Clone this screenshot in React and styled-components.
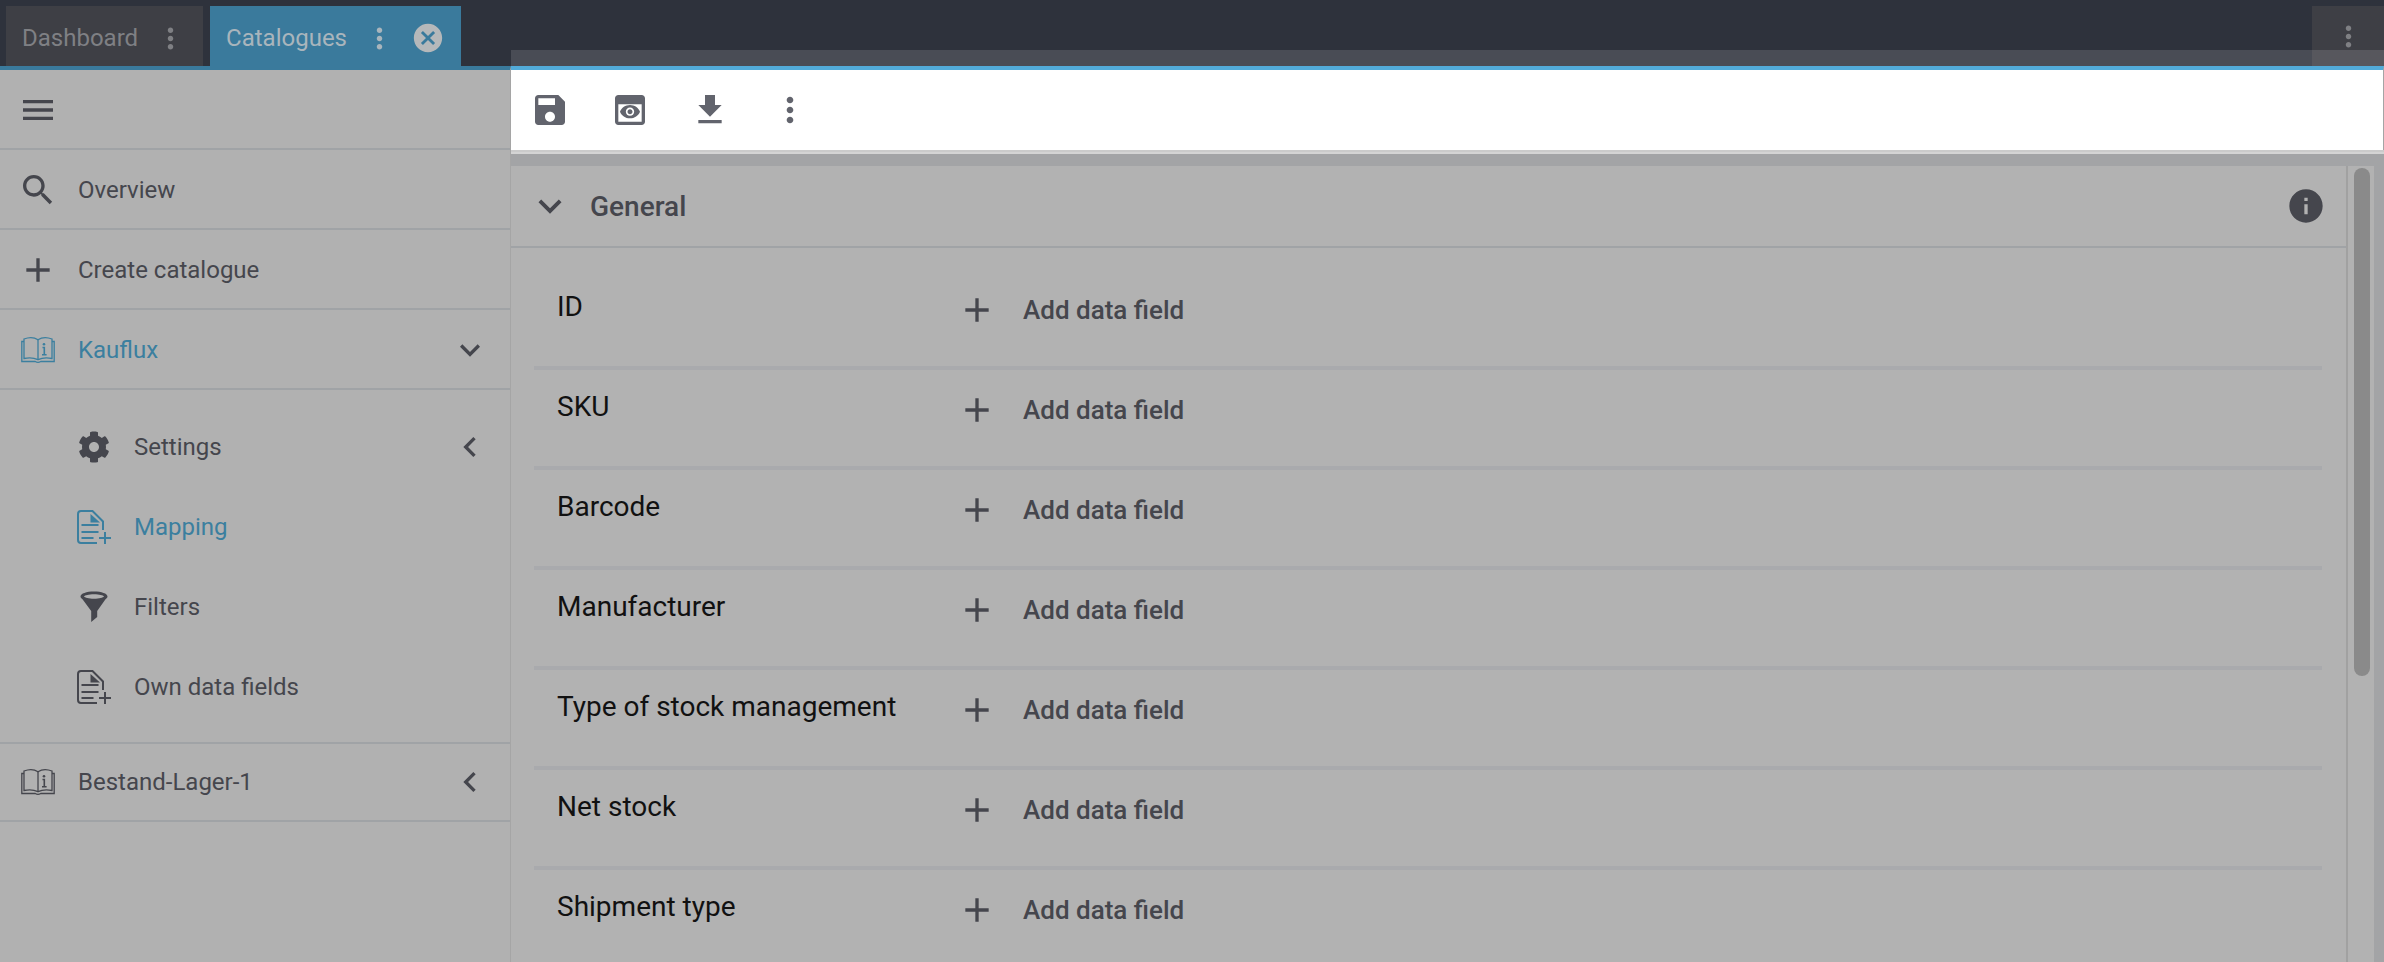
import React from "react";
import styled, { createGlobalStyle } from "styled-components";
import { FaCog } from "react-icons/fa";

const GlobalStyle = createGlobalStyle`
  * {
    box-sizing: border-box;
  }
  html,
  body {
    margin: 0;
    height: 100%;
    overflow: hidden;
    background: #b1b1b1;
    font-family: Roboto, "Liberation Sans", sans-serif;
  }
`;

const ICONS = {
  menu: "M3 18h18v-2H3v2zm0-5h18v-2H3v2zm0-7v2h18V6H3z",
  search:
    "M15.5 14h-.79l-.28-.27C15.41 12.59 16 11.11 16 9.5 16 5.91 13.09 3 9.5 3S3 5.91 3 9.5 5.91 16 9.5 16c1.61 0 3.09-.59 4.23-1.57l.27.28v.79l5 4.99L20.49 19l-4.99-5zm-6 0C7.01 14 5 11.99 5 9.5S7.01 5 9.5 5 14 7.01 14 9.5 11.99 14 9.5 14z",
  add: "M19 13h-6v6h-2v-6H5v-2h6V5h2v6h6v2z",
  more: "M12 8c1.1 0 2-.9 2-2s-.9-2-2-2-2 .9-2 2 .9 2 2 2zm0 2c-1.1 0-2 .9-2 2s.9 2 2 2 2-.9 2-2-.9-2-2-2zm0 6c-1.1 0-2 .9-2 2s.9 2 2 2 2-.9 2-2-.9-2-2-2z",
  save: "M17 3H5c-1.11 0-2 .9-2 2v14c0 1.1.89 2 2 2h14c1.1 0 2-.9 2-2V7l-4-4zm-5 16c-1.66 0-3-1.34-3-3s1.34-3 3-3 3 1.34 3 3-1.34 3-3 3zm3-10H5V5h10v4z",
  preview:
    "M19 3H5c-1.11 0-2 .9-2 2v14c0 1.1.89 2 2 2h14c1.1 0 2-.9 2-2V5c0-1.1-.89-2-2-2zm0 16H5V8.5h14V19zm-5.5-6c0 .83-.67 1.5-1.5 1.5s-1.500-.67-1.500-1.500.67-1.500 1.500-1.500 1.500.67 1.500 1.500zM12 9c-2.730 0-5.060 1.660-6 4 .94 2.340 3.270 4 6 4s5.060-1.660 6-4c-.94-2.340-3.270-4-6-4zm0 6.500c-1.380 0-2.500-1.120-2.500-2.500s1.120-2.500 2.500-2.500 2.500 1.120 2.500 2.500-1.120 2.500-2.500 2.500z",
  download: "M19 9h-4V3H9v6H5l7 7 7-7zM5 18v2h14v-2H5z",
  expand: "M16.59 8.59L12 13.17 7.41 8.59 6 10l6 6 6-6z",
  left: "M15.41 7.41L14 6l-6 6 6 6 1.41-1.41L10.83 12z",
  info: "M12 2C6.48 2 2 6.48 2 12s4.48 10 10 10 10-4.48 10-10S17.52 2 12 2zm1 15h-2v-6h2v6zm0-8h-2V7h2v2z",
  cancel:
    "M12 2C6.47 2 2 6.47 2 12s4.47 10 10 10 10-4.47 10-10S17.53 2 12 2zm5 13.59L15.59 17 12 13.41 8.41 17 7 15.59 10.59 12 7 8.41 8.41 7 12 10.59 15.59 7 17 8.41 13.41 12 17 15.59z",
};

const IconBox = styled.svg`
  flex: none;
  width: ${({ $size }) => $size}px;
  height: ${({ $size }) => $size}px;
`;

const MdIcon = ({ name, size = 40, color = "#45464d" }) => (
  <IconBox viewBox="0 0 24 24" $size={size} fill={color}>
    <path d={ICONS[name]} />
  </IconBox>
);

const BookIcon = ({ color }) => (
  <IconBox viewBox="0 0 34 27" $size={34} fill="none" stroke={color} strokeWidth="1.3">
    <path d="M3 2.500v19.500c5-1.200 10-.8 14 1.200 4-2 9-2.400 14-1.200V2.500c-5-2-10-2-14 .8-4-2.800-9-2.800-14-.8z" />
    <path d="M17 3.300v20" />
    <path d="M3 5H.8v20h13.400c1.600.9 4 .9 5.600 0h13.400V5H31" />
    <path d="M21.500 11h1.800v7M21 18.300h4.600" strokeWidth="1.600" />
    <circle cx="23" cy="7.800" r="1.300" fill={color} stroke="none" />
  </IconBox>
);

const DocPlusIcon = ({ color }) => (
  <IconBox viewBox="0 0 34 34" $size={34} fill="none" stroke={color} strokeWidth="2">
    <path d="M20 33H4a3 3 0 0 1-3-3V4a3 3 0 0 1 3-3h11.500L26 11.500V20" />
    <path d="M13.500 4v8.500H23z" fill={color} stroke="none" />
    <path d="M4.500 15h17M4.500 22h17M4.500 28h12M22 28h12M28 22v12" />
  </IconBox>
);

const FunnelIcon = ({ color }) => (
  <IconBox viewBox="0 0 32 32" $size={32} fill={color}>
    <path
      fillRule="evenodd"
      d="M16 .5C8.500.5 2.500 2.500 2.500 5.500c0 1 .8 2 2 2.700L13.200 20v11l6-5v-6l8.300-11.800c1.200-.7 2-1.700 2-2.700C29.500 2.500 23.500.5 16 .5zm0 2.800c5.500 0 9 1 10 2.200-1 1.200-4.500 2.200-10 2.200S7 6.700 6 5.500c1-1.200 4.500-2.200 10-2.200z"
    />
  </IconBox>
);

const CogIcon = styled(FaCog)`
  flex: none;
  width: 40px;
  height: 40px;
  padding: 4px;
`;

const Page = styled.div`
  position: relative;
  width: 2384px;
  height: 962px;
  overflow: hidden;
  color: #45464d;
`;

const TopBar = styled.div`
  display: flex;
  justify-content: space-between;
  height: 66px;
  padding-top: 6px;
  background: #2e323c;
`;

const TabList = styled.div`
  display: flex;
  gap: 7px;
  padding-left: 6px;
`;

const Tab = styled.div`
  display: flex;
  align-items: center;
  gap: 16px;
  padding: 4px 16px 0;
  font-size: 24px;
  color: ${({ $active }) => ($active ? "#a9b5bc" : "#7f8084")};
  background: ${({ $active }) => ($active ? "#3a7a9c" : "#3e3f45")};
`;

const TabClose = styled.span`
  display: flex;
  margin-left: -1px;
`;

const TabMenu = styled.div`
  display: flex;
  align-items: center;
  justify-content: center;
  width: 72px;
  background: #3e3f45;
`;

const Spotlight = styled.div`
  position: absolute;
  top: 50px;
  left: 511px;
  right: 0;
  height: 16px;
  background: rgba(255, 255, 255, 0.13);
`;

const Body = styled.div`
  display: flex;
  height: 896px;
`;

const Sidebar = styled.nav`
  flex: none;
  width: 511px;
  border-top: 4px solid #3a7a9c;
  border-right: 1px solid #a5a5a5;
  background: #b1b1b1;
`;

const NavRow = styled.div`
  display: flex;
  align-items: center;
  gap: 20px;
  height: 80px;
  padding: 2px 20px 0 18px;
  border-bottom: 2px solid #a0a3a6;
  font-size: 24px;
  color: ${({ $active }) => ($active ? "#3b7f9f" : "#45464d")};
`;

const LastNavRow = styled(NavRow)`
  height: 78px;
  padding-top: 0;
`;

const NavLabel = styled.span`
  flex: 1;
`;

const IconSlot = styled.span`
  display: flex;
  justify-content: center;
  flex: none;
  width: 40px;
`;

const SubMenu = styled.div`
  padding: 17px 0 15px;
  border-bottom: 2px solid #a0a3a6;
`;

const SubRow = styled.div`
  display: flex;
  align-items: center;
  gap: 20px;
  height: 80px;
  padding: 0 20px 0 74px;
  font-size: 24px;
  color: ${({ $active }) => ($active ? "#3b7f9f" : "#45464d")};
`;

const Main = styled.main`
  flex: 1;
  display: flex;
  flex-direction: column;
  min-width: 0;
`;

const Toolbar = styled.div`
  flex: none;
  display: flex;
  height: 84px;
  border-top: 4px solid #52abd9;
  border-right: 1px solid #a5a5a5;
  background: #fff;
`;

const ToolGroup = styled.div`
  display: flex;
  margin-left: -1px;
`;

const ToolButton = styled.div`
  display: flex;
  align-items: center;
  justify-content: center;
  width: 80px;
  height: 80px;
`;

const ToolbarEdge = styled.div`
  flex: none;
  height: 16px;
  border-top: 2px solid #cbcbcb;
  border-bottom: 12px solid #a3a4a6;
  background: #d4d4d4;
`;

const Workspace = styled.div`
  flex: 1;
  display: flex;
  min-height: 0;
  border-right: 10px solid #a3a4a6;
  background: #b2b2b2;
`;

const Content = styled.div`
  flex: 1;
  min-width: 0;
  border-right: 2px solid #a1a1a1;
`;

const SectionHeader = styled.div`
  display: flex;
  align-items: center;
  height: 82px;
  padding: 0 20px 0 16px;
  border-bottom: 2px solid #a0a3a6;
`;

const SectionTitle = styled.h2`
  flex: 1;
  margin: 0 0 0 17px;
  font-size: 28px;
  font-weight: 500;
  color: #45464d;
`;

const RowList = styled.div`
  padding: 22px 24px 0 23px;
`;

const FieldRow = styled.div`
  display: flex;
  align-items: flex-start;
  height: 100px;
  padding: 20px 0 0 23px;
  border-bottom: 4px solid #a9aaad;
`;

const FieldLabel = styled.div`
  width: 400px;
  padding-top: 1px;
  font-size: 28px;
  line-height: 32px;
  color: #111;
`;

const AddField = styled.div`
  display: flex;
  align-items: center;
  gap: 26px;
  height: 40px;
  font-size: 26px;
  font-weight: 500;
  color: #45464d;
`;

const ScrollTrack = styled.div`
  flex: none;
  width: 26px;
  padding: 2px 4px 0 6px;
`;

const ScrollThumb = styled.div`
  height: 508px;
  border-radius: 8px;
  background: #8a8a8a;
`;

const FIELDS = [
  "ID",
  "SKU",
  "Barcode",
  "Manufacturer",
  "Type of stock management",
  "Net stock",
  "Shipment type",
];

export default function App() {
  return (
    <Page>
      <GlobalStyle />
      <TopBar>
        <TabList>
          <Tab>
            Dashboard
            <MdIcon name="more" size={33} color="#7f8084" />
          </Tab>
          <Tab $active>
            Catalogues
            <MdIcon name="more" size={33} color="#a9b5bc" />
            <TabClose>
              <MdIcon name="cancel" size={34} color="#b5b8ba" />
            </TabClose>
          </Tab>
        </TabList>
        <TabMenu>
          <MdIcon name="more" size={33} color="#7f8084" />
        </TabMenu>
      </TopBar>
      <Spotlight />
      <Body>
        <Sidebar>
          <NavRow>
            <MdIcon name="menu" />
          </NavRow>
          <NavRow>
            <MdIcon name="search" />
            <NavLabel>Overview</NavLabel>
          </NavRow>
          <NavRow>
            <MdIcon name="add" />
            <NavLabel>Create catalogue</NavLabel>
          </NavRow>
          <NavRow $active>
            <IconSlot>
              <BookIcon color="#3b7f9f" />
            </IconSlot>
            <NavLabel>Kauflux</NavLabel>
            <MdIcon name="expand" />
          </NavRow>
          <SubMenu>
            <SubRow>
              <CogIcon />
              <NavLabel>Settings</NavLabel>
              <MdIcon name="left" />
            </SubRow>
            <SubRow $active>
              <IconSlot>
                <DocPlusIcon color="#3b7f9f" />
              </IconSlot>
              <NavLabel>Mapping</NavLabel>
            </SubRow>
            <SubRow>
              <IconSlot>
                <FunnelIcon color="#45464d" />
              </IconSlot>
              <NavLabel>Filters</NavLabel>
            </SubRow>
            <SubRow>
              <IconSlot>
                <DocPlusIcon color="#45464d" />
              </IconSlot>
              <NavLabel>Own data fields</NavLabel>
            </SubRow>
          </SubMenu>
          <LastNavRow>
            <IconSlot>
              <BookIcon color="#45464d" />
            </IconSlot>
            <NavLabel>Bestand-Lager-1</NavLabel>
            <MdIcon name="left" />
          </LastNavRow>
        </Sidebar>
        <Main>
          <Toolbar>
            <ToolGroup>
              <ToolButton>
                <MdIcon name="save" color="#62646d" />
              </ToolButton>
              <ToolButton>
                <MdIcon name="preview" color="#62646d" />
              </ToolButton>
              <ToolButton>
                <MdIcon name="download" color="#62646d" />
              </ToolButton>
              <ToolButton>
                <MdIcon name="more" color="#62646d" />
              </ToolButton>
            </ToolGroup>
          </Toolbar>
          <ToolbarEdge />
          <Workspace>
            <Content>
              <SectionHeader>
                <MdIcon name="expand" size={46} />
                <SectionTitle>General</SectionTitle>
                <MdIcon name="info" />
              </SectionHeader>
              <RowList>
                {FIELDS.map((field) => (
                  <FieldRow key={field}>
                    <FieldLabel>{field}</FieldLabel>
                    <AddField>
                      <MdIcon name="add" />
                      Add data field
                    </AddField>
                  </FieldRow>
                ))}
              </RowList>
            </Content>
            <ScrollTrack>
              <ScrollThumb />
            </ScrollTrack>
          </Workspace>
        </Main>
      </Body>
    </Page>
  );
}
